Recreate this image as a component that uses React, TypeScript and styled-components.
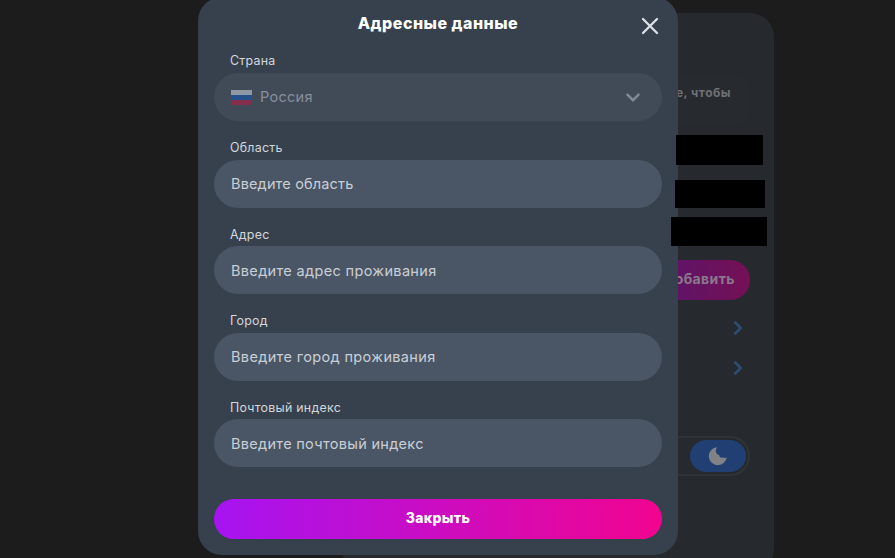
import React, { useState } from "react";
import styled, { createGlobalStyle } from "styled-components";

const fields = [
  { name: "region", label: "Область", placeholder: "Введите область", spacing: 0.16 },
  { name: "address", label: "Адрес", placeholder: "Введите адрес проживания", spacing: 0.34 },
  { name: "city", label: "Город", placeholder: "Введите город проживания", spacing: 0.36 },
  { name: "zip", label: "Почтовый индекс", placeholder: "Введите почтовый индекс", spacing: 0.3 },
];

const ProfileCard = () => (
  <Card>
    <Notice>Заполните все данные, чтобы</Notice>
    <AddButton>Добавить</AddButton>
    <Links>
      <LinkRow>
        <LinkArrow />
      </LinkRow>
      <LinkRow>
        <LinkArrow />
      </LinkRow>
    </Links>
    <ThemeSwitch>
      <ThemeThumb>
        <svg width="20" height="20" viewBox="0 0 20 20">
          <path
            d="M9.3 1.2A9 9 0 1 0 18.8 10.7A2.1 2.1 0 0 1 15.2 11.2A2.5 2.5 0 0 1 11.2 9.2A4.6 4.6 0 0 1 9.3 1.2Z"
            fill="#818285"
          />
        </svg>
      </ThemeThumb>
    </ThemeSwitch>
  </Card>
);

const LinkArrow = () => (
  <svg width="10" height="16" viewBox="0 0 10 16" fill="none">
    <path d="M1.5 1.8L7.7 8L1.5 14.2" stroke="#2c4d6e" strokeWidth="2.8" />
  </svg>
);

const AddressModal = () => {
  const [values, setValues] = useState<Record<string, string>>({});

  const handleChange = (event: React.ChangeEvent<HTMLInputElement>) => {
    setValues({ ...values, [event.target.name]: event.target.value });
  };

  return (
    <Modal>
      <Header>
        <Title>Адресные данные</Title>
        <CloseIcon aria-label="Закрыть окно">
          <svg width="18" height="18" viewBox="0 0 18 18" fill="none">
            <path
              d="M2 2L16 16M16 2L2 16"
              stroke="#dce0e5"
              strokeWidth="2.3"
              strokeLinecap="round"
            />
          </svg>
        </CloseIcon>
      </Header>
      <Form>
        <Field>
          <Label>Страна</Label>
          <CountrySelect>
            <Flag>
              <FlagStripe $color="#8f98a5" />
              <FlagStripe $color="#24508c" />
              <FlagStripe $color="#842e4b" />
            </Flag>
            <Country>Россия</Country>
            <svg width="16" height="10" viewBox="0 0 16 10" fill="none">
              <path
                d="M2.4 2.6L8 8.2L13.6 2.6"
                stroke="#818b98"
                strokeWidth="2.4"
                strokeLinecap="round"
              />
            </svg>
          </CountrySelect>
        </Field>
        {fields.map((field) => (
          <Field key={field.name}>
            <Label htmlFor={field.name}>{field.label}</Label>
            <Input
              id={field.name}
              name={field.name}
              placeholder={field.placeholder}
              value={values[field.name] || ""}
              onChange={handleChange}
              $spacing={field.spacing}
            />
          </Field>
        ))}
      </Form>
      <SubmitButton>Закрыть</SubmitButton>
    </Modal>
  );
};

const App = () => (
  <>
    <GlobalStyle />
    <Page>
      <ProfileCard />
      <AddressModal />
      <Mask $top={135} $left={676} $width={87} $height={30} />
      <Mask $top={180} $left={675} $width={90} $height={28} />
      <Mask $top={217} $left={671} $width={96} $height={29} />
    </Page>
  </>
);

export default App;

const GlobalStyle = createGlobalStyle`
  * {
    box-sizing: border-box;
  }

  body {
    margin: 0;
    background: #1c1c1c;
    font-family: Inter, "Open Sans", sans-serif;
  }

  button,
  input {
    border: none;
    font-family: inherit;
  }
`;

const Page = styled.div`
  position: relative;
  width: 895px;
  height: 558px;
  overflow: hidden;
`;

const Card = styled.div`
  width: 432px;
  height: 560px;
  margin: 13px 0 0 342px;
  padding: 62px 24px 0;
  display: flex;
  flex-direction: column;
  border-radius: 24px;
  background: #262a2f;
`;

const Notice = styled.div`
  height: 50px;
  padding: 9px 19px;
  border-radius: 16px;
  background: #272a2e;
  color: #6e7174;
  font-size: 12px;
  font-weight: 700;
  letter-spacing: 0.5px;
  line-height: 18px;
  text-align: right;
`;

const AddButton = styled.button`
  align-self: flex-end;
  width: 140px;
  height: 40px;
  margin-top: 135px;
  padding: 0 15px 3px;
  border-radius: 20px;
  background: linear-gradient(90deg, #4d1775, #751055);
  color: #89798b;
  font-size: 14px;
  font-weight: 700;
  letter-spacing: 0.4px;
  text-align: right;
`;

const Links = styled.div`
  margin-top: 8px;
`;

const LinkRow = styled.div`
  display: flex;
  align-items: center;
  justify-content: flex-end;
  height: 40px;
  padding-right: 7px;
`;

const ThemeSwitch = styled.div`
  display: flex;
  align-items: center;
  justify-content: flex-end;
  align-self: flex-end;
  width: 120px;
  height: 40px;
  margin-top: 48px;
  padding-right: 2px;
  border: 2px solid #303337;
  border-radius: 20px;
`;

const ThemeThumb = styled.div`
  display: flex;
  align-items: center;
  justify-content: center;
  width: 56px;
  height: 32px;
  border-radius: 16px;
  background: #213f73;
`;

const Modal = styled.div`
  position: absolute;
  top: -3px;
  left: 198px;
  width: 480px;
  height: 558px;
  padding: 0 16px;
  border-radius: 24px;
  background: #37414d;
`;

const Header = styled.div`
  display: flex;
  align-items: center;
  justify-content: center;
  height: 51.4px;
`;

const Title = styled.h2`
  margin: 0;
  color: #ffffff;
  font-size: 16px;
  font-weight: 800;
  letter-spacing: 0.5px;
  line-height: 20px;
  white-space: nowrap;
`;

const CloseIcon = styled.button`
  position: absolute;
  top: 20px;
  right: 19px;
  display: flex;
  padding: 0;
  background: none;
`;

const Form = styled.div`
  display: flex;
  flex-direction: column;
  gap: 14px;
`;

const Field = styled.div`
  display: flex;
  flex-direction: column;
`;

const Label = styled.label`
  height: 24.6px;
  padding: 1px 0 0 16px;
  color: #d3d7dc;
  font-size: 12.4px;
  letter-spacing: 0.27px;
  line-height: 24.6px;
`;

const CountrySelect = styled.div`
  display: flex;
  align-items: center;
  height: 48px;
  padding: 0 21px 0 17px;
  border-radius: 24px;
  background: #414b58;
`;

const Flag = styled.div`
  display: flex;
  flex-direction: column;
  width: 21px;
  height: 15px;
  margin-top: 1px;
`;

const FlagStripe = styled.span`
  flex: 1;
  background: ${({ $color }: { $color: string }) => $color};
`;

const Country = styled.span`
  flex: 1;
  margin-left: 8px;
  color: #87909c;
  font-size: 14.5px;
  letter-spacing: 0.28px;
`;

const Input = styled.input<{ $spacing: number }>`
  height: 48px;
  padding: 0 17px;
  border-radius: 24px;
  outline: none;
  background: #4a5665;
  color: #ffffff;
  font-size: 14.5px;
  letter-spacing: ${({ $spacing }) => $spacing}px;

  &::placeholder {
    color: #c9ced5;
    opacity: 1;
  }
`;

const SubmitButton = styled.button`
  width: 100%;
  height: 40px;
  margin-top: 31.6px;
  padding: 0 0 2px;
  border-radius: 20px;
  background: linear-gradient(90deg, #a614f2, #f1048f);
  color: #ffffff;
  font-size: 14px;
  font-weight: 800;
  letter-spacing: 0.3px;
`;

const Mask = styled.div<{
  $top: number;
  $left: number;
  $width: number;
  $height: number;
}>`
  position: absolute;
  top: ${({ $top }) => $top}px;
  left: ${({ $left }) => $left}px;
  width: ${({ $width }) => $width}px;
  height: ${({ $height }) => $height}px;
  background: #000000;
`;
